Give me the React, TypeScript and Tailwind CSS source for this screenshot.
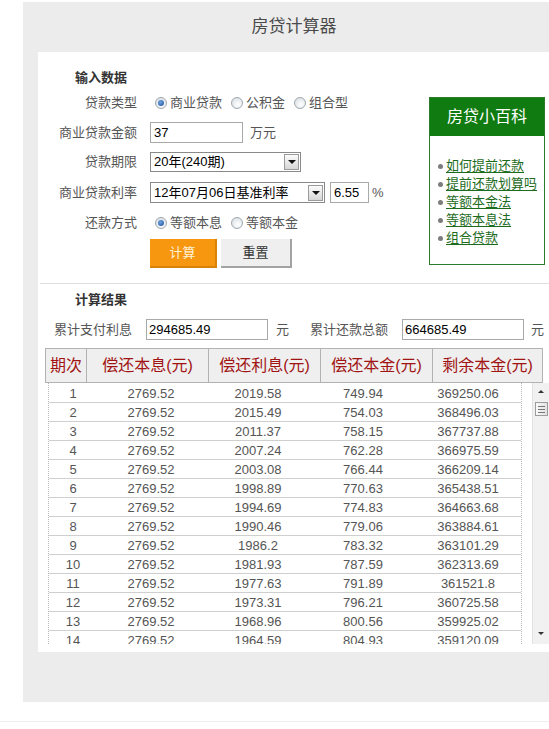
import React from "react";

const rows: string[][] = [
  ["1", "2769.52", "2019.58", "749.94", "369250.06"],
  ["2", "2769.52", "2015.49", "754.03", "368496.03"],
  ["3", "2769.52", "2011.37", "758.15", "367737.88"],
  ["4", "2769.52", "2007.24", "762.28", "366975.59"],
  ["5", "2769.52", "2003.08", "766.44", "366209.14"],
  ["6", "2769.52", "1998.89", "770.63", "365438.51"],
  ["7", "2769.52", "1994.69", "774.83", "364663.68"],
  ["8", "2769.52", "1990.46", "779.06", "363884.61"],
  ["9", "2769.52", "1986.2", "783.32", "363101.29"],
  ["10", "2769.52", "1981.93", "787.59", "362313.69"],
  ["11", "2769.52", "1977.63", "791.89", "361521.8"],
  ["12", "2769.52", "1973.31", "796.21", "360725.58"],
  ["13", "2769.52", "1968.96", "800.56", "359925.02"],
  ["14", "2769.52", "1964.59", "804.93", "359120.09"],
];

const links = ["如何提前还款", "提前还款划算吗", "等额本金法", "等额本息法", "组合贷款"];

function Radio({ checked, label }: { checked?: boolean; label: string }) {
  return (
    <label className="flex items-center text-[#555]">
      <span className="ml-[5px] mr-[3px] w-[12px] h-[12px] rounded-full border border-[#9ea7b0] bg-[radial-gradient(circle_at_60%_65%,#ffffff,#d5dadf)] flex items-center justify-center">
        {checked && <span className="w-[6px] h-[6px] rounded-full bg-[radial-gradient(circle_at_40%_35%,#6fa3e0,#1a4f97)]" />}
      </span>
      <span className="mr-[4px]">{label}</span>
    </label>
  );
}

function DropButton() {
  return (
    <span className="w-[15px] h-[16px] border border-[#9a9a9a] bg-gradient-to-b from-[#fbfbfb] to-[#d6d6d6] flex items-center justify-center">
      <span className="w-0 h-0 border-x-[4px] border-x-transparent border-t-[4px] border-t-[#111]" />
    </span>
  );
}

function Row({ label, h, children }: { label: string; h: string; children: React.ReactNode }) {
  return (
    <div className={`flex items-center ${h}`}>
      <span className="w-[87px] text-right text-[#555]">{label}</span>
      <div className="ml-[13px] flex items-center">{children}</div>
    </div>
  );
}

export default function App() {
  return (
    <div className="w-[549px] h-[729px] overflow-hidden bg-white pt-[2px] text-[13px] font-['Liberation_Sans','Noto_Sans_CJK_SC',sans-serif]">
      <div className="ml-[23px] w-[542px] h-[700px] bg-[#ececec]">
        {/* title */}
        <div className="h-[50px] flex items-center justify-center text-[17px] text-[#4a4a4a]">房贷计算器</div>

        <div className="ml-[15px] h-[600px] bg-white">
          {/* input */}
          <div className="flex h-[231px]">
            <div className="w-[391px] pt-[16px] pl-[12px]">
              <div className="pl-[25px] h-[20px] leading-[20px] font-bold text-[#333]">输入数据</div>
              <Row label="贷款类型" h="h-[30px]">
                <Radio checked label="商业贷款" />
                <Radio label="公积金" />
                <Radio label="组合型" />
              </Row>
              <Row label="商业贷款金额" h="h-[29px]">
                <span className="w-[93px] h-[21px] border border-[#a9a9a9] px-[3px] leading-[19px] text-black">37</span>
                <span className="ml-[7px] text-[#555]">万元</span>
              </Row>
              <Row label="贷款期限" h="h-[30px]">
                <span className="w-[151px] h-[20px] border border-[#8a8a8a] flex items-center justify-between pl-[3px] pr-[1px] text-black">
                  20年(240期)
                  <DropButton />
                </span>
              </Row>
              <Row label="商业贷款利率" h="h-[31px]">
                <span className="w-[175px] h-[21px] border border-[#8a8a8a] flex items-center justify-between pl-[3px] pr-[1px] text-black">
                  12年07月06日基准利率
                  <DropButton />
                </span>
                <span className="ml-[5px] w-[39px] h-[21px] border border-[#a9a9a9] px-[3px] leading-[19px] text-black">6.55</span>
                <span className="ml-[3px] text-[#555]">%</span>
              </Row>
              <Row label="还款方式" h="h-[30px]">
                <Radio checked label="等额本息" />
                <Radio label="等额本金" />
              </Row>
              <div className="mt-[1px] ml-[100px] flex gap-[4px]">
                <button className="w-[67px] h-[29px] bg-[#f7960f] border-r-2 border-b-2 border-[#d98208] text-[#fff1d6]">计算</button>
                <button className="w-[71px] h-[29px] bg-[#efefef] border-r-2 border-b-2 border-[#a3a3a3] text-[#333]">重置</button>
              </div>
            </div>

            {/* sidebar */}
            <div className="mt-[45px] w-[116px] h-[168px] border border-[#2b7d2b]">
              <div className="h-[38px] bg-[#0f7b10] flex items-center justify-center text-[16px] text-white">房贷小百科</div>
              <ul className="pt-[21px] pl-[8px]">
                {links.map((t) => (
                  <li key={t} className="h-[18px] flex items-center gap-[3px]">
                    <span className="w-[5px] h-[5px] rounded-full bg-[#7d7d7d]" />
                    <a href="#" className="text-[#1d6b1d] underline underline-offset-2">{t}</a>
                  </li>
                ))}
              </ul>
            </div>
          </div>

          <div className="h-px bg-[#dedede] ml-[2px]" />

          {/* result */}
          <div className="mt-[6px] pl-[37px] h-[20px] leading-[20px] font-bold text-[#333]">计算结果</div>
          <div className="mt-[9px] pl-[16px] flex items-center h-[21px] text-[#555]">
            <span>累计支付利息</span>
            <span className="ml-[14px] w-[122px] h-[21px] border border-[#a9a9a9] px-[2px] leading-[19px] text-black">294685.49</span>
            <span className="ml-[8px]">元</span>
            <span className="ml-[21px]">累计还款总额</span>
            <span className="ml-[14px] w-[122px] h-[21px] border border-[#a9a9a9] px-[2px] leading-[19px] text-black">664685.49</span>
            <span className="ml-[7px]">元</span>
          </div>

          <div className="mt-[8px] ml-[7px] w-[498px] h-[35px] border border-[#b2b2b2] bg-[#efefef] grid grid-cols-[40px_122px_112px_112px_1fr] text-[16px] text-[#a11414]">
            {["期次", "偿还本息(元)", "偿还利息(元)", "偿还本金(元)", "剩余本金(元)"].map((h, i) => (
              <div key={h} className={`flex items-center justify-center ${i > 0 ? "border-l border-[#b2b2b2]" : ""}`}>{h}</div>
            ))}
          </div>

          <div className="ml-[10px] flex h-[261px]">
            <div className="w-[474px] h-full overflow-hidden pt-[1px] border-x border-dotted border-[#b8b8b8]">
              {rows.map((r) => (
                <div key={r[0]} className="h-[19px] border-b border-[#cfcfcf] grid grid-cols-[48px_108px_106px_104px_1fr] leading-[19px] text-center text-[#555]">
                  {r.map((c, i) => (
                    <span key={i}>{c}</span>
                  ))}
                </div>
              ))}
            </div>
            {/* scrollbar */}
            <div className="ml-[10px] w-[17px] h-full bg-[#f1f1f1] border-l border-[#e2e2e2] flex flex-col items-center">
              <span className="mt-[7px] w-0 h-0 border-x-[3px] border-x-transparent border-b-[3px] border-b-[#333]" />
              <span className="mt-[9px] w-[13px] h-[14px] border border-[#9c9c9c] bg-gradient-to-r from-[#fafafa] to-[#e2e2e2] flex flex-col items-center justify-center gap-[2px]">
                <span className="w-[7px] h-px bg-[#777]" />
                <span className="w-[7px] h-px bg-[#777]" />
                <span className="w-[7px] h-px bg-[#777]" />
              </span>
              <span className="flex-1" />
              <span className="mb-[9px] w-0 h-0 border-x-[3px] border-x-transparent border-t-[3px] border-t-[#333]" />
            </div>
          </div>
        </div>
      </div>
      <div className="mt-[19px] h-px bg-[#eeeeee]" />
    </div>
  );
}
